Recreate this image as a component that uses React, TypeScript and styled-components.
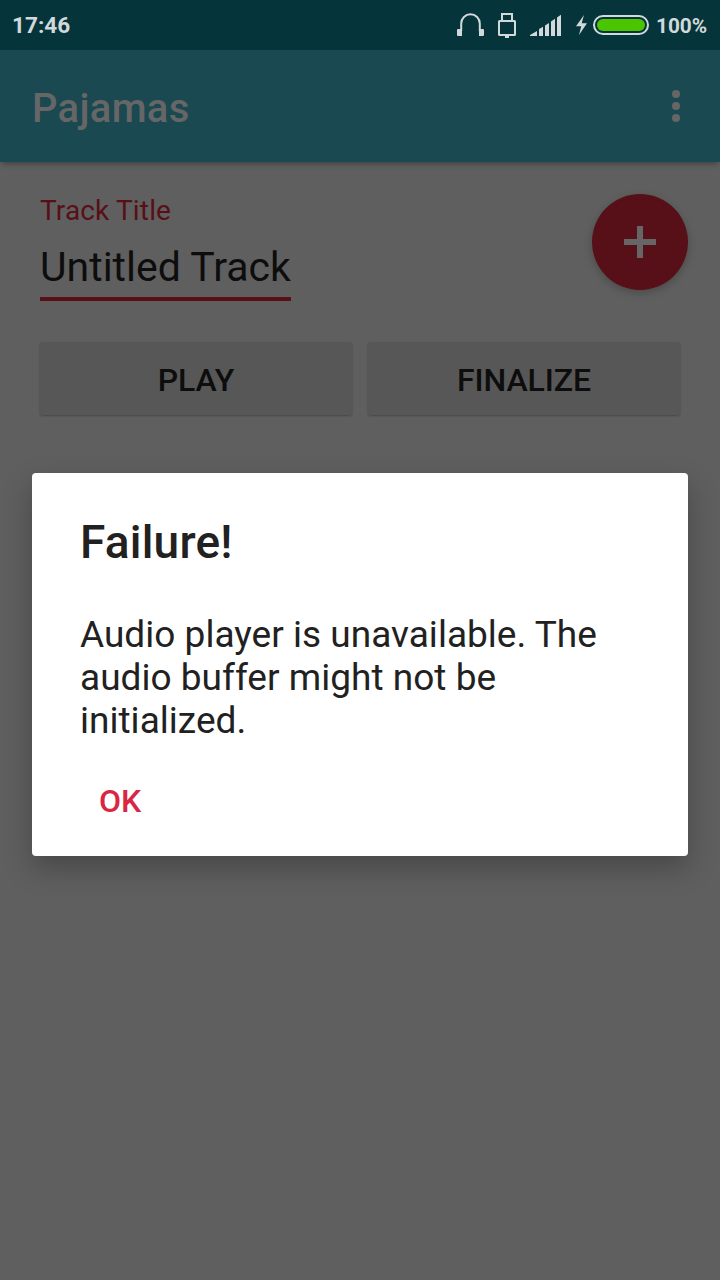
import React from "react";
import styled, { createGlobalStyle } from "styled-components";

const GlobalStyle = createGlobalStyle`
  * { box-sizing: border-box; }
  body { margin: 0; background: #5f5f5f; font-family: Roboto, "Liberation Sans", sans-serif; }
  button { border: 0; padding: 0; font-family: inherit; cursor: pointer; }
`;

const Screen = styled.div`
  position: relative;
  width: 720px;
  height: 1280px;
  overflow: hidden;
  display: flex;
  flex-direction: column;
  background: #5f5f5f;
`;

const StatusBar = styled.header`
  height: 50px;
  flex: none;
  display: flex;
  align-items: center;
  padding: 0 12px;
  background: #05343a;
  color: #d2d9da;
  font-weight: 700;
`;

const Clock = styled.span`
  padding-top: 2px;
  font-size: 22.6px;
  line-height: 48px;
`;

const StatusIcons = styled.svg`
  display: block;
  margin-left: auto;
`;

const Percent = styled.span`
  width: 52px;
  margin-left: 7px;
  padding-top: 2px;
  font-size: 20.8px;
  line-height: 48px;
  white-space: nowrap;
`;

const Toolbar = styled.div`
  height: 112px;
  flex: none;
  display: flex;
  align-items: center;
  justify-content: space-between;
  padding: 4px 38px 0 32px;
  background: #1a4952;
  box-shadow: 0 4px 5px -2px rgba(0, 0, 0, 0.3);
`;

const AppTitle = styled.h1`
  margin: 2px 0 0;
  color: #666;
  font-size: 40px;
  font-weight: 500;
  line-height: 48px;
  letter-spacing: 0.3px;
`;

const MenuButton = styled.button`
  width: 12px;
  height: 36px;
  margin-bottom: 4px;
  background: none;
`;

const Content = styled.main`
  display: flex;
  flex-direction: column;
  padding: 32px 32px 0 39px;
`;

const TrackRow = styled.section`
  height: 148px;
  display: flex;
  justify-content: space-between;
  align-items: flex-start;
`;

const Field = styled.div`
  display: flex;
  flex-direction: column;
  margin-left: 1px;
`;

const FieldLabel = styled.label`
  height: 32px;
  color: #570f18;
  font-size: 28px;
  line-height: 34px;
  letter-spacing: 0.15px;
`;

const FieldValue = styled.div`
  width: 251px;
  height: 75px;
  padding-top: 17px;
  border-bottom: 4px solid #570f18;
  color: #0d0d0d;
  font-size: 41px;
  line-height: 48px;
  white-space: nowrap;
`;

const AddButton = styled.button`
  display: flex;
  align-items: center;
  justify-content: center;
  width: 96px;
  height: 96px;
  border-radius: 50%;
  background: #570f18;
  box-shadow: 0 3px 8px rgba(0, 0, 0, 0.22);
`;

const Actions = styled.div`
  display: flex;
  gap: 14px;
`;

const ActionButton = styled.button`
  width: 314px;
  height: 73px;
  padding-top: 2px;
  border-radius: 4px;
  background: #575757;
  box-shadow: 0 2px 2px -1px rgba(0, 0, 0, 0.25);
  color: #0d0d0d;
  font-size: 32px;
  font-weight: 500;
  letter-spacing: -0.1px;
`;

const DialogLayer = styled.div`
  position: absolute;
  inset: 0;
  padding: 473px 32px 0;
`;

const Dialog = styled.div`
  height: 383px;
  display: flex;
  flex-direction: column;
  align-items: flex-start;
  padding: 42px 48px 0;
  border-radius: 4px;
  background: #fff;
  color: #212121;
  box-shadow: 0 12px 28px rgba(0, 0, 0, 0.25);
`;

const DialogTitle = styled.h2`
  margin: 0;
  font-size: 46px;
  font-weight: 500;
  line-height: 54px;
  letter-spacing: 0.2px;
`;

const DialogText = styled.p`
  margin: 44px 0 0;
  font-size: 37px;
  line-height: 43px;
  letter-spacing: 0.02px;
  white-space: nowrap;
`;

const DialogAction = styled.button`
  height: 72px;
  margin: 23px 0 0 19px;
  background: none;
  color: #d92643;
  font-size: 32px;
  font-weight: 500;
`;

export default function App() {
  return (
    <Screen>
      <GlobalStyle />
      <StatusBar>
        <Clock>17:46</Clock>
        <StatusIcons width="193" height="50" viewBox="456 0 193 50" fill="#d2d9da">
          <path d="M461.2 31V23.5a9.3 9.3 0 0 1 18.6 0V31" fill="none" stroke="#d2d9da" strokeWidth="2" />
          <path d="M458 29h4v7h-4a1 1 0 0 1-1-1v-5a1 1 0 0 1 1-1zM479 29h4a1 1 0 0 1 1 1v5a1 1 0 0 1-1 1h-4z" />
          <path d="M502 20v-6h10v6" fill="none" stroke="#d2d9da" strokeWidth="2" />
          <rect x="499" y="21" width="16" height="14" rx="0.5" fill="none" stroke="#d2d9da" strokeWidth="2" />
          <rect x="505" y="35" width="4" height="3" />
          <path d="M530 36v-1l7-4v5zM539 36v-7l4-2.2V36zM545 36V25.5l4-2.5v13zM551 36V21.5l4-2.8V36zM557 36V17.5l4-2.8V36z" />
          <path d="M584 15l-8 11.3h5.2L579 35l8-11.8h-5.3z" />
          <rect x="594" y="16" width="54" height="18" rx="9" fill="none" stroke="#d2d9da" strokeWidth="2" />
          <rect x="597" y="19" width="48" height="12" rx="6" fill="#4bc500" />
        </StatusIcons>
        <Percent>100%</Percent>
      </StatusBar>
      <Toolbar>
        <AppTitle>Pajamas</AppTitle>
        <MenuButton aria-label="More options">
          <svg width="12" height="36" viewBox="0 0 12 36" fill="#666" style={{ display: "block" }}>
            <circle cx="6" cy="6" r="4" />
            <circle cx="6" cy="18" r="4" />
            <circle cx="6" cy="30" r="4" />
          </svg>
        </MenuButton>
      </Toolbar>
      <Content>
        <TrackRow>
          <Field>
            <FieldLabel>Track Title</FieldLabel>
            <FieldValue>Untitled Track</FieldValue>
          </Field>
          <AddButton aria-label="Add">
            <svg width="32" height="32" viewBox="0 0 32 32" fill="#666">
              <path d="M13 0h6v13h13v6H19v13h-6V19H0v-6h13z" />
            </svg>
          </AddButton>
        </TrackRow>
        <Actions>
          <ActionButton>PLAY</ActionButton>
          <ActionButton>FINALIZE</ActionButton>
        </Actions>
      </Content>
      <DialogLayer>
        <Dialog role="alertdialog">
          <DialogTitle>Failure!</DialogTitle>
          <DialogText>
            Audio player is unavailable. The
            <br />
            audio buffer might not be
            <br />
            initialized.
          </DialogText>
          <DialogAction>OK</DialogAction>
        </Dialog>
      </DialogLayer>
    </Screen>
  );
}
